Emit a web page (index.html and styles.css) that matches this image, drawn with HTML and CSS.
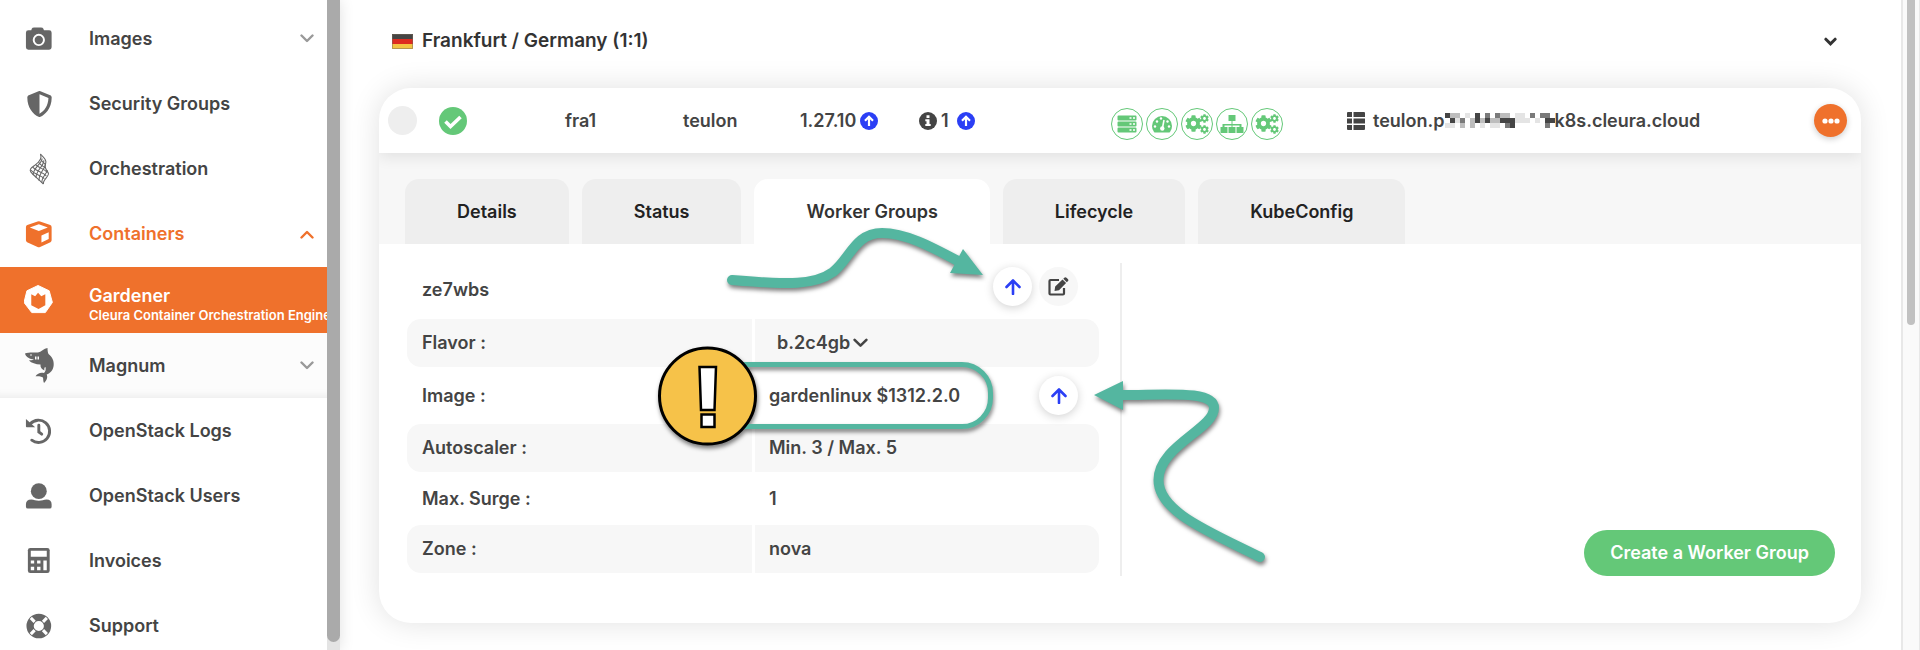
FILE: index.html
```html
<!DOCTYPE html>
<html lang="en">
<head>
<meta charset="utf-8">
<title>Gardener</title>
<link rel="stylesheet" href="styles.css">
</head>
<body>
<svg class="defs" aria-hidden="true">
  <symbol id="i-cog" viewBox="0 0 512 512"><path d="M487.4 315.7l-42.6-24.6c4.3-23.2 4.3-47 0-70.2l42.6-24.6c4.9-2.8 7.1-8.6 5.5-14-11.1-35.6-30-67.8-54.7-94.6-3.8-4.1-10-5.1-14.8-2.3L380.8 110c-17.9-15.4-38.5-27.3-60.8-35.1V25.8c0-5.6-3.9-10.5-9.4-11.7-36.7-8.2-74.3-7.8-109.2 0-5.5 1.2-9.4 6.1-9.4 11.7V75c-22.2 7.9-42.8 19.8-60.8 35.1L88.7 85.5c-4.9-2.8-11-1.9-14.8 2.3-24.7 26.7-43.6 58.9-54.7 94.6-1.7 5.4.6 11.2 5.5 14L67.3 221c-4.3 23.2-4.3 47 0 70.2l-42.6 24.6c-4.9 2.8-7.1 8.6-5.5 14 11.1 35.6 30 67.8 54.7 94.6 3.8 4.1 10 5.1 14.8 2.3l42.6-24.6c17.9 15.4 38.5 27.3 60.8 35.1v49.2c0 5.6 3.9 10.5 9.4 11.7 36.7 8.2 74.3 7.8 109.2 0 5.5-1.2 9.4-6.1 9.4-11.7v-49.2c22.2-7.9 42.8-19.8 60.8-35.1l42.6 24.6c4.9 2.8 11 1.9 14.8-2.3 24.7-26.7 43.6-58.9 54.7-94.6 1.5-5.5-.7-11.3-5.6-14.1zM256 336c-44.1 0-80-35.9-80-80s35.9-80 80-80 80 35.9 80 80-35.9 80-80 80z"/></symbol>
  <symbol id="i-cogs" viewBox="0 0 24 20"><use href="#i-cog" x="0" y="1" width="17" height="17"/><use href="#i-cog" x="15" y="0" width="9" height="9"/><use href="#i-cog" x="15" y="11" width="9" height="9"/></symbol>
  <symbol id="i-down" viewBox="0 0 14 9"><path d="M1.5 1.5 7 7l5.5-5.5" fill="none" stroke="currentColor" stroke-width="2.4" stroke-linecap="round" stroke-linejoin="round"/></symbol>
  <symbol id="i-down-bold" viewBox="0 0 14 9"><path d="M2 2l5 5 5-5" fill="none" stroke="currentColor" stroke-width="3.2" stroke-linecap="round"/></symbol>
  <symbol id="i-upcircle" viewBox="0 0 18 18"><circle cx="9" cy="9" r="9"/><path d="M9 14V5M5 8.8 9 4.8l4 4" fill="none" stroke="#fff" stroke-width="2.2"/></symbol>
  <symbol id="i-up" viewBox="0 0 16 16"><path d="M8 15V2M1.5 8 8 1.5 14.500 8" fill="none" stroke="currentColor" stroke-width="2.6" stroke-linecap="round" stroke-linejoin="round"/></symbol>
</svg>
<div class="app">
  <aside class="sidebar">
    <nav class="menu">
      <a class="item" href="#"><svg class="icon" viewBox="0 0 32 32"><path d="M8 5.500Q8.500 4 10.500 4h7Q19.500 4 20 5.500L20.600 7H26q2.500 0 2.500 2.500v15q0 2.500-2.500 2.500H4.500Q2 27 2 24.500v-15Q2 7 4.500 7h3z"/><circle cx="15.300" cy="17" r="5.300" fill="none" stroke="#fff" stroke-width="2"/></svg><span>Images</span><svg class="caret" aria-hidden="true"><use href="#i-down"/></svg></a>
      <a class="item" href="#"><svg class="icon shield" viewBox="0 0 512 512"><path d="M466.500 83.700l-192-80a48.150 48.150 0 0 0-36.900 0l-192 80C27.700 91.100 16 108.600 16 128c0 198.500 114.500 335.700 221.500 380.300 11.800 4.900 25.100 4.900 36.900 0C360.100 472.600 496 349.300 496 128c0-19.400-11.700-36.900-29.500-44.300zM256.100 446.300l-.1-381 175.900 73.300c-3.300 151.400-82.100 261.100-175.800 307.700z"/></svg><span>Security Groups</span></a>
      <a class="item" href="#"><svg class="icon" viewBox="0 0 32 32"><g fill="none" stroke="currentColor" stroke-width="1.100"><path d="M17 .5C20 4 23.500 6 22.500 9.500S21 14 25 20c2 3-6 7-5 11.500"/><path d="M17 .5c2 5-1 8-5 11S5 16 7 19s11 10 13 12.500"/><path d="M18.500 5C20 9 9 15 9.500 22M20.500 7C21 13 12 17 12.500 25M22 11c0 5-7 9-6.500 17M24 17c0 4-6 7-5.500 13"/><path d="M17 6c2 3 4 4 5 5M15 9c3 4 5 4 7 6M12 11.500c4 4 9 4 12 8M9 14c4 5 10 5 14 9M7 17c4 5 10 5 14 9"/></g></svg><span>Orchestration</span></a>
      <a class="item open" href="#"><svg class="icon" viewBox="0 0 32 32"><path d="M14 3q1.300-.5 2.600 0l10.500 3.700Q28.500 7.300 28.500 9v13.500q0 1.300-1.200 2l-10.700 4.800q-1.300.5-2.600 0L3.200 24.500q-1.200-.7-1.200-2V9q0-1.700 1.400-2.300z"/><path d="M15.300 6 6 9.300l9.300 3.500 9.300-3.500zM18 17.500l7.500-3.200v6.900L18 24.800z" fill="#fff"/></svg><span>Containers</span><svg class="caret flip" aria-hidden="true"><use href="#i-down"/></svg></a>
      <a class="item active" href="#"><svg class="icon" viewBox="0 0 32 32"><path d="M14.500 1 26 6.500 29.300 18.500 22 29H8L0 18.500 3 6.500z" stroke="currentColor" stroke-linejoin="round"/><path d="M7.500 10 11.500 12 14.500 8.500 17.800 12 22 10v11.500L15 25.300 7.500 21.500z" fill="#ef712c"/></svg><span class="stack"><span>Gardener</span><small>Cleura Container Orchestration Engine</small></span></a>
      <a class="item muted" href="#"><svg class="icon shark" viewBox="0 0 29 35"><path d="M0 5.500C3 4 9 4.500 13 4.500 16 4 19 .5 22.500 0c0 2 .3 4.500 1 6 4 3 5.500 7 5.200 11-.3 5-3.500 8.500-7 9.500 1.500 3-.5 6.500-2.700 8.500-1-2-.7-4-1-5.500-2.500-1.500-5-1-7.500-1.200 2-3.300 5.500-4.300 8.500-3.300 1.500-1.500 2-3.500 1.500-6-1 .2-1.500 1.500-1 3.500-2.500-1-4.500-3-4-6-5-.2-9-1.500-11.500-4 1-.3 3.500-.3 5-1C5 11 1 9.500 0 5.500z"/><path d="M10 8.500h1.500v3H10zM12.500 8.500H14v3h-1.500z" fill="#fcfcfc"/><circle cx="6" cy="7" r=".8" fill="#fcfcfc"/></svg><span>Magnum</span><svg class="caret" aria-hidden="true"><use href="#i-down"/></svg></a>
      <a class="item" href="#"><svg class="icon" viewBox="0 0 32 32"><path d="M6.500 8.500A11.500 11.500 0 1 1 8 25.500" fill="none" stroke="currentColor" stroke-width="3" stroke-linecap="round"/><path d="M2 3.500l9.500 8.500H2.800Q2 12 2 11z"/><path d="M15.300 10v7l3 2.300" fill="none" stroke="currentColor" stroke-width="3" stroke-linecap="round"/></svg><span>OpenStack Logs</span></a>
      <a class="item" href="#"><svg class="icon" viewBox="0 0 32 32"><circle cx="15.300" cy="11" r="8.200"/><path d="M2 27v-2.500Q2 19.500 7.500 19.500c3 0 4.500 1.300 7.800 1.300s5-1.300 8-1.300q5.200 0 5.200 5V27q0 2-2 2H4q-2 0-2-2z"/></svg><span>OpenStack Users</span></a>
      <a class="item" href="#"><svg class="icon" viewBox="0 0 32 32"><rect x="4" y="2.500" width="22.500" height="26" rx="2.500"/><path d="M7 5.500h16.500v6H7zM7 15.500h3.500v3H7zM13.500 15.500h3.500v3h-3.500zM20 15.500h3.500v10H20zM7 22h3.500v3.500H7zM13.500 22h3.500v3.500h-3.500z" fill="#fff"/></svg><span>Invoices</span></a>
      <a class="item" href="#"><svg class="icon" viewBox="0 0 32 32"><circle cx="15.300" cy="16" r="9" fill="none" stroke="currentColor" stroke-width="7.500"/><path d="M7 7.700l4 4M23.600 7.700l-4 4M7 24.300l4-4M23.600 24.300l-4-4" stroke="#fff" stroke-width="3.200"/></svg><span>Support</span></a>
    </nav>
    <div class="rail"><div class="rail-thumb"></div></div>
  </aside>

  <main class="content">
    <button class="region" type="button">
      <svg class="flag" viewBox="0 0 21 15"><path d="M0 0h21v15H0z" fill="#454545"/><path d="M0 5h21v5H0z" fill="#dd2b20"/><path d="M0 10h21v5H0z" fill="#f3c443"/><path d="M.5.5h20v14H.5z" fill="none" stroke="#776a58" stroke-opacity=".5"/></svg>
      <span>Frankfurt / Germany (1:1)</span>
      <svg class="region-caret"><use href="#i-down-bold"/></svg>
    </button>

    <section class="card">
      <header class="summary">
        <input class="pick" type="radio" aria-label="Select cluster">
        <svg class="ok" viewBox="0 0 28 28"><circle cx="14" cy="14" r="14" fill="#64c878"/><path d="M6.500 14.500l5 5 10-9.500" fill="none" stroke="#fff" stroke-width="3.600"/></svg>
        <span>fra1</span>
        <span>teulon</span>
        <span class="inline">1.27.10 <svg class="mini blue"><use href="#i-upcircle"/></svg></span>
        <span class="inline"><svg class="mini" viewBox="0 0 18 18"><circle cx="9" cy="9" r="9"/><path d="M7.500 3.300h3v2.700h-3zM6.300 7.300h4.200v4.700h1.200v2H6.300v-2h1.200V9.300H6.300z" fill="#fff"/></svg>1 <svg class="mini blue second"><use href="#i-upcircle"/></svg></span>
        <span class="states">
          <span class="state"><svg viewBox="0 0 20 18"><path d="M1.500.5h17q1 0 1 1v3q0 1-1 1h-17q-1 0-1-1v-3q0-1 1-1zM1.500 6.500h17q1 0 1 1v3q0 1-1 1h-17q-1 0-1-1v-3q0-1 1-1zM1.500 12.500h17q1 0 1 1v3q0 1-1 1h-17q-1 0-1-1v-3q0-1 1-1z"/><path d="M12.500 3h2M16 3h2M12.500 9h2M16 9h2M12.500 15h2M16 15h2" stroke="#fff" stroke-width="1.400"/></svg></span>
          <span class="state"><svg viewBox="0 0 20 18"><path d="M2 17Q0 14.500 0 11a10 10 0 0 1 20 0q0 3.500-2 6-.5.500-1.300.5H3.300Q2.500 17.500 2 17z"/><path d="M10.500 13 12 5" stroke="#fff" stroke-width="1.500"/><g fill="#fff"><circle cx="10.300" cy="13.500" r="2.200"/><circle cx="3" cy="11.500" r="1.200"/><circle cx="5" cy="6.500" r="1.200"/><circle cx="9" cy="3.500" r="1.200"/><circle cx="15.500" cy="6.500" r="1.200"/><circle cx="17" cy="11.500" r="1.200"/></g></svg></span>
          <span class="state"><svg class="wide"><use href="#i-cogs"/></svg></span>
          <span class="state"><svg class="wide" viewBox="0 0 24 20"><path d="M8.500 1h7v6h-3v3h9v3h2v6h-7v-6h3v-1.500h-7V13h3v6h-7v-6h3v-1.500h-7V13h3v6h-7v-6h2v-3h9V7h-3z"/></svg></span>
          <span class="state"><svg class="wide"><use href="#i-cogs"/></svg></span>
        </span>
        <span class="host"><svg class="list" viewBox="0 0 18 18"><path d="M0 1q0-1 1-1h4v5H0zM6.500 0H17q1 0 1 1v4H6.500zM0 6.500h5v5H0zM6.500 6.500H18v5H6.500zM0 13h5v5H1q-1 0-1-1zM6.500 13H18v4q0 1-1 1H6.500z"/></svg><span>teulon.p</span><svg class="mosaic" viewBox="0 0 22 3" shape-rendering="crispEdges"><path d="M0 0h1v1H0zM1 1h1v1H1zM6 0h1v2H6zM8 1h1v1H8zM11 1h3v1h-3zM13 2h1v1h-1zM20 1h1v2h-1zM21 1h1v1h-1z" fill="#454545"/><path d="M8 0h1v1H8zM10 0h1v1h-1zM17 0h1v1h-1zM19 0h2v1h-2zM12 2h1v1h-1zM3 1h1v1H3zM20 2h1v1h-1z" fill="#7a7a7a"/><path d="M1 0h2v1H1zM5 1h1v1H5zM9 1h2v1H9zM11 0h2v1h-2zM3 2h1v1H3zM5 2h1v1H5zM14 1h1v1h-1zM7 1h1v1H7z" fill="#bdbdbd"/><path d="M0 2h2v1H0zM2 1h1v1H2zM4 0h1v1H4zM7 2h1v1H7zM9 2h2v1H9zM14 0h2v2h-2zM16 1h1v1h-1zM18 1h1v1h-1z" fill="#e4e4e4"/></svg><span>k8s.cleura.cloud</span></span>
        <button class="more" type="button" aria-label="More actions"><svg viewBox="0 0 18 6"><circle cx="3" cy="3" r="2.600"/><circle cx="9" cy="3" r="2.600"/><circle cx="15" cy="3" r="2.600"/></svg></button>
      </header>

      <div class="tabs">
        <button class="tab" type="button">Details</button>
        <button class="tab" type="button">Status</button>
        <button class="tab selected" type="button">Worker Groups</button>
        <button class="tab" type="button">Lifecycle</button>
        <button class="tab" type="button">KubeConfig</button>
      </div>

      <div class="body">
        <div class="group">
          <div class="group-head">
            <span class="group-name">ze7wbs</span>
            <button class="round raised" type="button" aria-label="Upgrade"><svg><use href="#i-up"/></svg></button>
            <button class="round soft" type="button" aria-label="Edit"><svg class="edit" viewBox="0 0 21 19"><path d="M11 3H2.500Q1.500 3 1.500 4v12.500q0 1 1 1H15q1 0 1-1V11" fill="none" stroke="currentColor" stroke-width="2.200"/><path d="M6.500 14l.7-4.500L14.500 2.500l3.600 3.600L11 13.300zM15.300 1.700l1-1q1-1 2.200 0l1.300 1.300q1.200 1.200 0 2.300l-1 1z"/></svg></button>
          </div>
          <table class="props">
            <tr class="shade"><th scope="row"><label for="flavor">Flavor :</label></th><td><span class="flavor"><select id="flavor"><option>b.2c4gb</option></select><svg><use href="#i-down"/></svg></span></td></tr>
            <tr class="tall"><th scope="row">Image :</th><td><div class="cell"><span>gardenlinux $1312.2.0</span><button class="round raised" type="button" aria-label="Upgrade image"><svg><use href="#i-up"/></svg></button></div></td></tr>
            <tr class="shade"><th scope="row">Autoscaler :</th><td>Min. 3 / Max. 5</td></tr>
            <tr class="mid"><th scope="row">Max. Surge :</th><td>1</td></tr>
            <tr class="shade"><th scope="row">Zone :</th><td>nova</td></tr>
          </table>
          <svg class="notes" viewBox="0 0 900 360" aria-hidden="true">
            <g fill="none" stroke="#54b6a0" stroke-linecap="round">
              <path d="M325 56C383 61 408 61 426 48C443 35 448 9 475 9C498 9 523 22 551 37" stroke-width="10"/>
              <path d="M853 333C803 308 751.500 288 751.500 256C751.500 222 807 205 807 184C807 166 760 171 714 171" stroke-width="10"/>
              <path d="M300 140.500H555A28.500 28.500 0 0 1 583.500 169V174A28.500 28.500 0 0 1 555 202.500H300" stroke-width="5"/>
            </g>
            <path d="M556 25 576 51 543 49zM687 171 716 157V186z" fill="#54b6a0"/>
            <circle cx="300.500" cy="172" r="48" fill="#f6c249" stroke="#000" stroke-width="3"/>
            <path d="M292.500 143h16.500l-1.500 43h-13.500zM294.500 190.500h13v12.500h-13z" fill="#fff" stroke="#000" stroke-width="2.500"/>
          </svg>
        </div>
        <button class="create" type="button">Create a Worker Group</button>
      </div>
    </section>
  </main>
  <div class="scroll"><div class="scroll-thumb"></div></div>
</div>
</body>
</html>
```
FILE: styles.css
```css
* { box-sizing: border-box; }
body {
  margin: 0;
  height: 100vh;
  overflow: hidden;
  background: #fff;
  color: #444;
  font: 600 18px/24px Inter, "Liberation Sans", sans-serif;
}
button, select { font: inherit; color: inherit; border: 0; padding: 0; background: none; }
svg { fill: currentColor; flex: none; }
.defs { position: absolute; width: 0; height: 0; }
.app { display: flex; height: 100%; }

.sidebar { display: flex; width: 340px; flex: none; box-shadow: 0 0 14px rgba(0,0,0,.12); overflow: hidden; }
.menu { flex: 1; min-width: 0; padding-top: 6px; overflow: hidden; }
.item {
  display: flex;
  align-items: center;
  gap: 34px;
  height: 65px;
  padding: 0 13px 0 24px;
  color: #444;
  text-decoration: none;
  white-space: nowrap;
}
.icon { width: 31px; height: 32px; color: #666; }
.shield { height: 26px; }
.shark { height: 35px; }
.caret { width: 14px; height: 9px; margin-left: auto; color: #999; }
.flip { transform: rotate(180deg); }
.open, .open .icon, .open .caret { color: #ef712c; }
.open { height: 66px; }
.active { height: 66px; background: #ef712c; color: #fff; }
.active .icon { color: #fff; }
.stack { display: flex; flex-direction: column; padding-top: 6px; }
.stack small { font-size: 13px; line-height: 14px; }
.muted { background: #fcfcfc; box-shadow: inset 0 -10px 8px -8px rgba(0,0,0,.07); }
.rail { width: 13px; background: #e4e4e4; padding-bottom: 8px; }
.rail-thumb { height: 100%; background: #aaa; border-radius: 0 0 7px 7px; }

.content { flex: 1; min-width: 0; padding: 29px 40px 27px 39px; }
.region {
  display: flex;
  align-items: center;
  gap: 9px;
  width: 100%;
  padding: 0 24px 0 13px;
  color: #333;
  font-size: 19px;
  text-align: left;
}
.flag { width: 21px; height: 15px; }
.region-caret { width: 13px; height: 9px; margin-left: auto; }

.card { margin-top: 35px; border-radius: 32px; background: #fff; box-shadow: 0 0 30px rgba(0,0,0,.12); overflow: hidden; }
.summary {
  position: relative;
  display: grid;
  grid-template-columns: 51px 126fr 118fr 117fr 119fr 192fr 236fr 467fr 34px;
  align-items: center;
  height: 65px;
  padding: 0 13px 0 9px;
  box-shadow: 0 4px 14px rgba(0,0,0,.09);
}
.pick { appearance: none; width: 29px; height: 29px; margin: 0; border-radius: 50%; background: #eee; }
.ok { width: 28px; height: 28px; }
.inline { display: flex; align-items: center; gap: 4px; white-space: nowrap; }
.mini { width: 18px; height: 18px; }
.blue { color: #2b3ff5; }
.second { margin-left: 4px; }
.states { display: flex; gap: 3px; padding-top: 6px; }
.state { display: grid; place-items: center; width: 32px; height: 32px; border: 1px solid #64c878; border-radius: 50%; color: #64c878; }
.state svg { width: 20px; height: 18px; }
.state .wide { width: 24px; height: 20px; }
.host { display: flex; align-items: center; }
.list { width: 18px; height: 18px; margin-right: 8px; }
.mosaic { width: 110px; height: 15px; }
.more { display: grid; place-items: center; width: 33px; height: 33px; border-radius: 50%; background: #ef712c; color: #fff; box-shadow: 0 2px 6px rgba(0,0,0,.2); }
.more svg { width: 18px; height: 6px; }

.tabs { display: flex; gap: 13px; padding: 26px 26px 0; background: #f7f7f7; }
.tab { height: 65px; padding: 0 52px; border-radius: 14px 14px 0 0; background: #eee; color: #222; }
.tab.selected { background: #fff; color: #333; }

.body { display: flex; justify-content: space-between; align-items: flex-end; padding: 19px 26px 47px 28px; }
.group { position: relative; width: 715px; padding: 4px 21px 3px 0; border-right: 2px solid #eee; }
.group-head { display: flex; align-items: flex-start; gap: 7px; height: 52px; padding: 0 21px 0 15px; }
.group-name { flex: 1; padding-top: 11px; }
.round { display: grid; place-items: center; flex: none; width: 39px; height: 39px; border-radius: 50%; }
.round svg { width: 16px; height: 16px; }
.raised { background: #fff; color: #2b3ff5; box-shadow: 0 2px 10px rgba(0,0,0,.18); }
.soft { background: #f7f7f7; }
.round .edit { width: 21px; height: 19px; }
.props { width: 100%; border-spacing: 0; }
.props th, .props td { height: 48px; padding: 0 0 0 14px; font-weight: 600; text-align: left; }
.props th { width: 348px; border-right: 3px solid #fff; padding-left: 15px; }
.props .tall th, .props .tall td { height: 57px; }
.props .mid th, .props .mid td { height: 53px; }
.shade th, .shade td { background: #f7f7f7; }
.shade th { border-radius: 14px 0 0 14px; }
.shade td { border-radius: 0 14px 14px 0; }
.flavor { display: flex; align-items: center; gap: 2px; padding-left: 8px; }
.flavor select { appearance: none; }
.flavor svg { width: 15px; height: 10px; }
.cell { display: flex; align-items: center; justify-content: space-between; padding-right: 21px; }
.notes { position: absolute; left: 0; top: -39px; width: 900px; height: 360px; overflow: visible; pointer-events: none; filter: drop-shadow(1px 3px 2px rgba(0,0,0,.5)); }
.create { height: 46px; padding: 0 26px; border-radius: 23px; background: #64c878; color: #fff; }

.scroll { width: 19px; padding: 0 4px; background: #fafafa; border: solid #e8e8e8; border-width: 0 1px 0 2px; }
.scroll-thumb { height: 50%; background: #c1c1c1; border-radius: 0 0 5px 5px; }
```
